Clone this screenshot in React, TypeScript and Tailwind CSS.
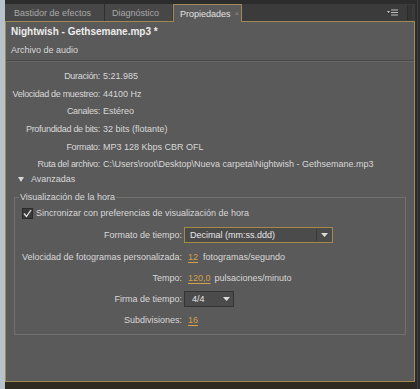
export default function App() {
  const props: [string, string][] = [
    ["Duración:", "5:21.985"],
    ["Velocidad de muestreo:", "44100 Hz"],
    ["Canales:", "Estéreo"],
    ["Profundidad de bits:", "32 bits (flotante)"],
    ["Formato:", "MP3 128 Kbps CBR OFL"],
    ["Ruta del archivo:", "C:\\Users\\root\\Desktop\\Nueva carpeta\\Nightwish - Gethsemane.mp3"],
  ];
  const Arrow = () => (
    <svg width="7" height="4" viewBox="0 0 7 4">
      <path d="M0 0 H7 L3.5 4 Z" fill="#dcdcdc" />
    </svg>
  );
  return (
    <div className="w-[420px] h-[389px] flex bg-[#2d2d2d] overflow-hidden text-[9px] leading-[12px] text-[#d8d8d8] font-['Liberation_Sans',Arial,sans-serif]">
      <div className="w-[5px] shrink-0 bg-[#b6c3cc]" />
      <div className="w-[410px] shrink-0 flex flex-col">
        {/* tab bar */}
        <div className="h-[21px] shrink-0 bg-[#2c2c2c] pt-[4px] flex flex-col">
          <div className="h-[17px] flex items-start bg-[#3b3b3b]">
            <div className="w-[100px] h-[17px] bg-[#474747] flex items-center pl-[9px] text-[#a9a9a9] border-r border-[#2f2f2f] whitespace-nowrap">
              Bastidor de efectos
            </div>
            <div className="w-[67px] h-[17px] bg-[#474747] flex items-center pl-[7px] text-[#a9a9a9] whitespace-nowrap">
              Diagnóstico
            </div>
            <div className="w-[1px] h-[17px]" />
            <div className="relative z-10 w-[69px] h-[18px] bg-[#5a5a5a] border-t border-l border-r border-[#a08a52] flex items-center pl-[6px] text-[#e2e2e2] whitespace-nowrap">
              <span>Propiedades</span>
              <span className="ml-[4px] text-[#8a8a8a] text-[8px]">×</span>
            </div>
            <div className="flex-1 h-[17px] flex items-center justify-end pr-[3px]">
              <svg width="12" height="7" viewBox="0 0 12 7" className="mr-[8px]">
                <path d="M0 2 H3 L1.5 4 Z" fill="#cfcfcf" />
                <rect x="4" y="0.5" width="7" height="1" fill="#bdbdbd" />
                <rect x="4" y="3" width="7" height="1" fill="#bdbdbd" />
                <rect x="4" y="5.5" width="7" height="1" fill="#bdbdbd" />
              </svg>
              <div className="w-[5px] h-[15px] bg-[#343434] border-l border-[#2a2a2a]" />
            </div>
          </div>
        </div>

        {/* panel */}
        <div className="h-[361px] shrink-0 border border-[#a08a52] bg-[#5a5a5a] flex flex-col">
          <div className="mt-[1px] h-[18px] flex items-center pl-[5px] font-bold text-[10px] text-[#ededed] whitespace-nowrap">
            Nightwish - Gethsemane.mp3 *
          </div>
          <div className="h-[18px] flex items-center pl-[5px]">Archivo de audio</div>
          <div className="mt-[1px] h-[1px] bg-[#474747]" />
          <div className="h-[1px] bg-[#676767]" />
          <div className="mt-[5px]" />
          {props.map(([l, v]) => (
            <div key={l} className="h-[17.7px] flex items-center whitespace-nowrap">
              <div className="w-[94px] text-right tracking-[-0.3px]">{l}</div>
              <div className="ml-[3px]">{v}</div>
            </div>
          ))}
          <div className="h-[12px] flex items-center pl-[12px]">
            <svg width="6" height="5" viewBox="0 0 6 5">
              <path d="M0 0 H6 L3 5 Z" fill="#d6d6d6" />
            </svg>
            <span className="ml-[7px]">Avanzadas</span>
          </div>

          <fieldset className="mt-[6px] mx-[8px] border border-[#717171] flex flex-col">
            <legend className="ml-[4px] px-[1px] leading-[12px] h-[12px]">Visualización de la hora</legend>
            <div className="h-[20px] flex items-center pl-[7px]">
              <div className="w-[11px] h-[11px] bg-[#3a3a3a] border border-[#2b2b2b] flex items-center justify-center">
                <svg width="9" height="9" viewBox="0 0 9 9">
                  <path d="M1 4.5 L3.5 7.5 L8 1" stroke="#e6e6e6" strokeWidth="1.3" fill="none" />
                </svg>
              </div>
              <span className="ml-[3px]">Sincronizar con preferencias de visualización de hora</span>
            </div>
            <div className="h-[23px] flex items-center">
              <div className="w-[167px] text-right">Formato de tiempo:</div>
              <div className="ml-[2px] w-[149px] h-[16px] border border-[#a58a47] bg-[#4b4b4b] flex items-center">
                <span className="flex-1 pl-[5px] text-[#e6e6e6]">Decimal (mm:ss.ddd)</span>
                <div className="w-[16px] h-[12px] border-l border-[#3a3a3a] flex items-center justify-center">
                  <Arrow />
                </div>
              </div>
            </div>
            <div className="h-[22px] flex items-center whitespace-nowrap">
              <div className="w-[167px] text-right">Velocidad de fotogramas personalizada:</div>
              <span className="ml-[6px] text-[#d4a04a] underline underline-offset-[2px]">12</span>
              <span className="ml-[5px]">fotogramas/segundo</span>
            </div>
            <div className="h-[20px] flex items-center whitespace-nowrap">
              <div className="w-[167px] text-right">Tempo:</div>
              <span className="ml-[6px] text-[#d4a04a] underline underline-offset-[2px]">120,0</span>
              <span className="ml-[4px]">pulsaciones/minuto</span>
            </div>
            <div className="h-[22px] flex items-center">
              <div className="w-[167px] text-right">Firma de tiempo:</div>
              <div className="ml-[2px] w-[50px] h-[16px] border border-[#343434] bg-[#4b4b4b] flex items-center">
                <span className="flex-1 pl-[7px] text-[#e6e6e6]">4/4</span>
                <div className="w-[14px] flex items-center justify-center">
                  <Arrow />
                </div>
              </div>
            </div>
            <div className="h-[20px] flex items-center">
              <div className="w-[167px] text-right">Subdivisiones:</div>
              <span className="ml-[6px] text-[#d4a04a] underline underline-offset-[2px]">16</span>
            </div>
            <div className="h-[4px]" />
          </fieldset>
        </div>
        <div className="flex-1 bg-[#2e2a22]" />
      </div>
      <div className="w-[5px] shrink-0 bg-[#2c2c2c] flex">
        <div className="ml-[2px] w-[1px] bg-[#3e3e3e]" />
      </div>
    </div>
  );
}
